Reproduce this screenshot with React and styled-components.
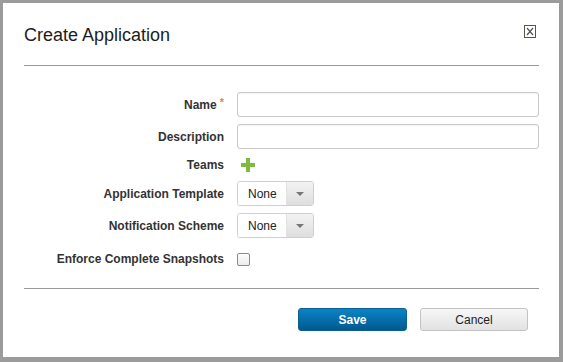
import styled, { createGlobalStyle } from "styled-components";

const GlobalStyle = createGlobalStyle`
  html, body {
    margin: 0;
    padding: 0;
    background: #ffffff;
  }
  body {
    font-family: "Liberation Sans", Arial, sans-serif;
    color: #222;
  }
`;

const Dialog = styled.div`
  box-sizing: border-box;
  width: 563px;
  height: 362px;
  background: #fff;
  border-style: solid;
  border-color: #9b9b9b;
  border-width: 3px 4px 5px 3px;
  padding: 0 20px 0 21px;
  display: flex;
  flex-direction: column;
`;

const Header = styled.div`
  display: flex;
  align-items: flex-start;
  justify-content: space-between;
  height: 63px;
  border-bottom: 1px solid #9a9a9a;
  box-sizing: border-box;
`;

const Title = styled.h1`
  margin: 21px 0 0;
  font-size: 18px;
  font-weight: normal;
  line-height: 22px;
  color: #1d1d1d;
`;

const CloseButton = styled.button`
  margin: 22px 3px 0 0;
  padding: 0;
  border: 0;
  background: none;
  width: 12px;
  height: 13px;
  cursor: pointer;
  svg {
    display: block;
  }
`;

const Form = styled.div`
  display: grid;
  grid-template-columns: 200px 302px;
  grid-template-rows: 25px 25px 18px 25px 25px 27px;
  column-gap: 13px;
  row-gap: 7px;
  padding: 26px 0 16px;
  border-bottom: 1px solid #9a9a9a;
`;

const Label = styled.label`
  align-self: center;
  justify-self: end;
  font-size: 12px;
  font-weight: bold;
  color: #333;
  white-space: nowrap;
`;

const Required = styled.span`
  color: #e08a1e;
  font-size: 11px;
  position: relative;
  top: -3px;
  margin-left: 3px;
`;

const TextInput = styled.input`
  box-sizing: border-box;
  width: 100%;
  height: 25px;
  border: 1px solid #c8c8c8;
  border-radius: 3px;
  box-shadow: inset 0 1px 1px rgba(0, 0, 0, 0.05);
  font: 12px "Liberation Sans", Arial, sans-serif;
  padding: 0 6px;
`;

const AddButton = styled.span`
  align-self: center;
  display: inline-flex;
  margin-left: 4px;
  width: 14px;
  height: 14px;
`;

const Select = styled.div`
  box-sizing: border-box;
  width: 77px;
  height: 25px;
  display: flex;
  border: 1px solid #cfcfcf;
  border-radius: 3px;
  overflow: hidden;
  font-size: 12px;
  color: #222;
`;

const SelectValue = styled.span`
  flex: 1;
  display: flex;
  align-items: center;
  padding-left: 10px;
  background: #fff;
`;

const SelectArrow = styled.span`
  width: 26px;
  display: flex;
  align-items: center;
  justify-content: center;
  background: linear-gradient(#f3f3f3, #dedede);
  border-left: 1px solid #e2e2e2;
  &::after {
    content: "";
    border-left: 4px solid transparent;
    border-right: 4px solid transparent;
    border-top: 4px solid #777;
  }
`;

const Checkbox = styled.span`
  align-self: center;
  box-sizing: border-box;
  width: 13px;
  height: 13px;
  border: 1px solid #8a8a8a;
  border-radius: 2px;
  background: linear-gradient(#fdfdfd, #ececec);
  margin-top: 2px;
`;

const Footer = styled.div`
  display: flex;
  justify-content: flex-end;
  gap: 13px;
  padding: 19px 11px 0 0;
`;

const Button = styled.button`
  box-sizing: border-box;
  width: ${(p) => (p.primary ? "109px" : "108px")};
  height: 23px;
  border-radius: 3px;
  font-family: "Liberation Sans", Arial, sans-serif;
  font-size: 12px;
  font-weight: ${(p) => (p.primary ? "bold" : "normal")};
  color: ${(p) => (p.primary ? "#fff" : "#222")};
  border: 1px solid ${(p) => (p.primary ? "#0b5f8e" : "#c3c3c3")};
  background: ${(p) =>
    p.primary
      ? "linear-gradient(#0a84c6, #00598f)"
      : "linear-gradient(#f7f7f7, #e2e2e2)"};
  cursor: pointer;
`;

function CloseIcon() {
  return (
    <svg width="12" height="13" viewBox="0 0 12 13">
      <rect x="0.5" y="0.5" width="11" height="12" fill="none" stroke="#55554a" />
      <path d="M3 3 L9 10 M9 3 L3 10" stroke="#55554a" strokeWidth="1.2" />
    </svg>
  );
}

function PlusIcon() {
  return (
    <svg width="14" height="14" viewBox="0 0 14 14">
      <path d="M5 0 H9 V5 H14 V9 H9 V14 H5 V9 H0 V5 H5 Z" fill="#7fbb3c" />
    </svg>
  );
}

function SelectBox({ value }) {
  return (
    <Select>
      <SelectValue>{value}</SelectValue>
      <SelectArrow />
    </Select>
  );
}

export default function App() {
  return (
    <>
      <GlobalStyle />
      <Dialog>
        <Header>
          <Title>Create Application</Title>
          <CloseButton aria-label="Close">
            <CloseIcon />
          </CloseButton>
        </Header>
        <Form>
          <Label>
            Name<Required>*</Required>
          </Label>
          <TextInput />
          <Label>Description</Label>
          <TextInput />
          <Label>Teams</Label>
          <AddButton>
            <PlusIcon />
          </AddButton>
          <Label>Application Template</Label>
          <SelectBox value="None" />
          <Label>Notification Scheme</Label>
          <SelectBox value="None" />
          <Label>Enforce Complete Snapshots</Label>
          <Checkbox />
        </Form>
        <Footer>
          <Button primary>Save</Button>
          <Button>Cancel</Button>
        </Footer>
      </Dialog>
    </>
  );
}
